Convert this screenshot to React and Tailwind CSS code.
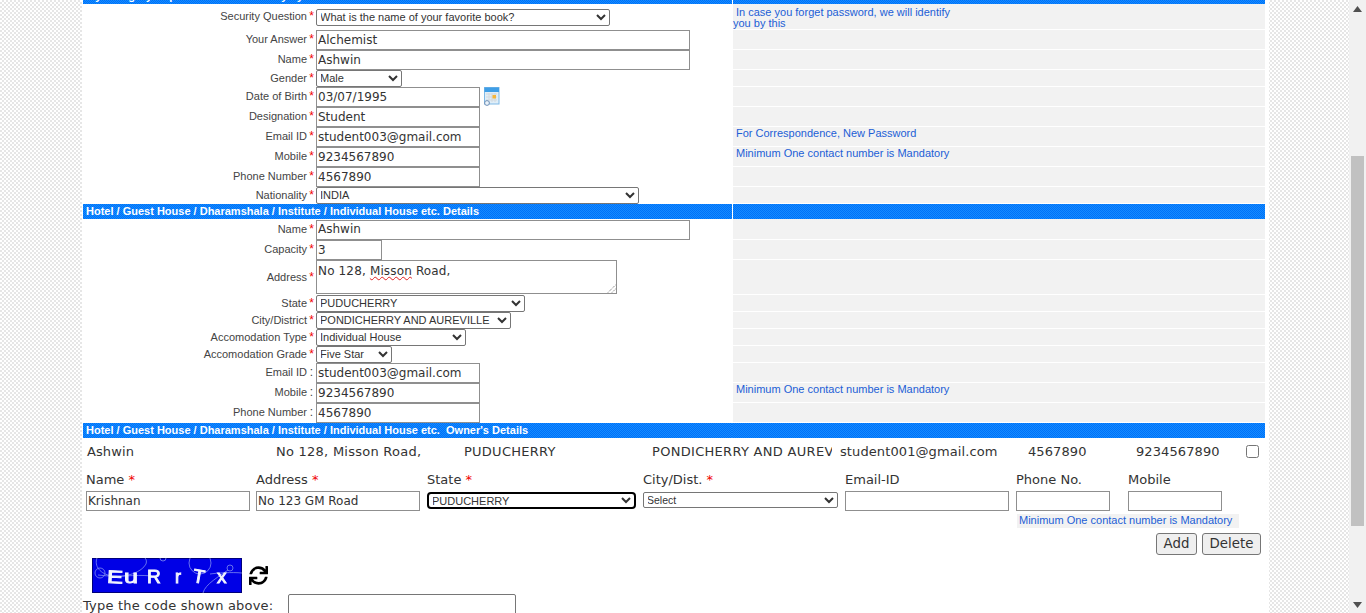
import React from "react";
import { FaSync } from "react-icons/fa";

const sans = "font-['Liberation_Sans',Arial,sans-serif]";
const dv = "font-['DejaVu_Sans',Verdana,sans-serif]";

function Band({ children, split = true, h = "h-[15px]" }) {
  return (
    <div className={`${h} flex items-end overflow-hidden`}>
      <div className={`${h} w-[649px] shrink-0 flex items-end overflow-hidden pl-[3px] bg-[image:repeating-conic-gradient(#0070f8_0_25%,#148cff_0_50%)] bg-[length:2px_2px] text-white font-bold text-[11px] leading-[15px] whitespace-pre ${sans}`}>
        {children}
      </div>
      <div className={`${h} flex-1 bg-[image:repeating-conic-gradient(#0070f8_0_25%,#148cff_0_50%)] bg-[length:2px_2px] ${split ? "ml-px" : ""}`} />
    </div>
  );
}

function Row({ h, label, star = true, hint, children }) {
  return (
    <div className="flex" style={{ height: h }}>
      <div className="w-[650px] shrink-0 flex items-center">
        <div className={`w-[224px] shrink-0 text-right text-[11px] leading-[14px] -translate-y-px text-[#444] ${sans}`}>{label}</div>
        <div className={`w-[9px] shrink-0 text-center text-[12px] leading-[14px] -translate-y-px ${star ? "text-[#f00000]" : "text-[#444]"} ${sans}`}>{star ? "*" : ":"}</div>
        <div className="flex items-center gap-[4px]">{children}</div>
      </div>
      <div className={`flex-1 mb-px bg-[#f2f2f2] text-[11px] leading-[11px] text-[#1c5ed6] ${sans}`}>{hint}</div>
    </div>
  );
}

function Field({ w, value = "", h = "h-[20px]", text = "text-[12px]" }) {
  return (
    <input
      readOnly
      value={value}
      className={`${w} ${h} ${text} ${dv} block border border-[#8f8f8f] bg-white px-px pb-px text-[#333] outline-none`}
    />
  );
}

function Sel({ w, value, h = "h-[17px]", text = "text-[11px]", extra = "border-[#767676]" }) {
  return (
    <select
      defaultValue={value}
      className={`${w} ${h} ${text} ${sans} block border ${extra} rounded-[2px] bg-white pl-0 pb-px text-[#333] outline-none appearance-auto [text-indent:-1px]`}
    >
      <option>{value}</option>
    </select>
  );
}

function Hint({ children }) {
  return <div className="pl-[3px] pt-px">{children}</div>;
}

function CalendarIcon() {
  return (
    <svg width="16" height="19" viewBox="0 0 16 19" className="self-start">
      <rect x="0.5" y="0.5" width="14.5" height="16.5" fill="#dfeef8" stroke="#7fb9e6" />
      <rect x="0.5" y="0.5" width="14.5" height="4.5" fill="#3f9ee6" />
      <path d="M2 7h11M2 10h11M2 13h11M5 6v9M8 6v9M11 6v9" stroke="#d4d9de" strokeWidth="1" />
      <rect x="8.5" y="8" width="3.5" height="3.5" fill="#f5b63c" />
      <circle cx="3" cy="16" r="2.4" fill="#eaf3fa" stroke="#6f8fb5" />
    </svg>
  );
}

function Captcha() {
  return (
    <svg width="150" height="35" viewBox="0 0 150 35" className="block">
      <defs>
        <filter id="soft" x="-5%" y="-5%" width="110%" height="110%">
          <feGaussianBlur stdDeviation="0.4" />
        </filter>
      </defs>
      <rect width="150" height="35" fill="#0000e6" />
      <rect x="0.5" y="0.5" width="149" height="34" fill="none" stroke="#00007a" />
      <g filter="url(#soft)">
        <g fill="none" stroke="#7f8cf0" strokeWidth="0.8">
          <path d="M5 0 C 2 8, 8 16, 20 18 C 34 20, 50 14, 54 6 C 55 3, 54 1, 53 0" />
          <circle cx="108" cy="5" r="11" />
          <circle cx="71" cy="0" r="3" />
          <circle cx="138" cy="10" r="3" />
          <circle cx="8" cy="15" r="5" />
          <path d="M6 17 C 30 20, 40 16, 60 18 M118 16 C 125 15, 140 14, 150 15 M111 35 C 113 26, 128 18, 136 12" />
        </g>
        <g fill="#f2f4ff" stroke="#f2f4ff" strokeWidth="0.9" fontFamily="'Liberation Sans', Arial, sans-serif">
          <text x="15" y="25" fontSize="18" textLength="16" lengthAdjust="spacingAndGlyphs" transform="rotate(3 22 20)">E</text>
          <text x="32" y="25" fontSize="18" textLength="14" lengthAdjust="spacingAndGlyphs">u</text>
          <text x="55" y="25" fontSize="19">R</text>
          <text x="83" y="25" fontSize="18">r</text>
          <text x="101" y="25" fontSize="19" transform="rotate(10 108 18)">T</text>
          <text x="125" y="25" fontSize="19">x</text>
        </g>
      </g>
    </svg>
  );
}

export default function App() {
  return (
    <div className={`h-[613px] w-[1366px] overflow-hidden flex bg-[image:repeating-conic-gradient(#e6e6e6_0_25%,#ffffff_0_50%)] bg-[length:4px_4px] ${sans}`}>
      <main className="ml-[82px] w-[1187px] h-full overflow-hidden bg-white pl-px pr-[4px]">
        <Band h="h-[4px]">My Category Superintendent Authority by</Band>

        <Row h={26} label="Security Question" hint={
          <div className="pt-[3px]"><div className="pl-[3px]">In case you forget password, we will identify</div><div>you by this</div></div>
        }>
          <Sel w="w-[294px]" value="What is the name of your favorite book?" />
        </Row>
        <Row h={20} label="Your Answer"><Field w="w-[374px]" value="Alchemist" /></Row>
        <Row h={20} label="Name"><Field w="w-[374px]" value="Ashwin" /></Row>
        <Row h={17} label="Gender"><Sel w="w-[86px]" value="Male" /></Row>
        <Row h={20} label="Date of Birth"><Field w="w-[164px]" value="03/07/1995" /><CalendarIcon /></Row>
        <Row h={20} label="Designation"><Field w="w-[164px]" value="Student" /></Row>
        <Row h={20} label="Email ID" hint={<Hint>For Correspondence, New Password</Hint>}><Field w="w-[164px]" value="student003@gmail.com" /></Row>
        <Row h={20} label="Mobile" hint={<Hint>Minimum One contact number is Mandatory</Hint>}><Field w="w-[164px]" value="9234567890" /></Row>
        <Row h={20} label="Phone Number"><Field w="w-[164px]" value="4567890" /></Row>
        <Row h={17} label="Nationality"><Sel w="w-[323px]" value="INDIA" /></Row>

        <Band>Hotel / Guest House / Dharamshala / Institute / Individual House etc. Details</Band>

        <Row h={21} label="Name"><Field w="w-[374px]" value="Ashwin" /></Row>
        <Row h={20} label="Capacity"><Field w="w-[66px]" value="3" /></Row>
        <Row h={35} label="Address">
          <div className={`relative w-[301px] h-[34px] -mt-px border border-[#8f8f8f] bg-white px-px pt-[2px] text-[12px] tracking-[0.15px] leading-[16px] text-[#333] ${dv}`}>
            No 128, <span className="underline decoration-wavy decoration-[#e02020] decoration-1 underline-offset-1">Misson</span> Road,
            <svg width="10" height="10" viewBox="0 0 10 10" className="absolute right-0 bottom-0">
              <path d="M2 9.5 9.5 2M6 9.5 9.5 6" stroke="#666" strokeWidth="1" strokeDasharray="1 1" />
            </svg>
          </div>
        </Row>
        <Row h={17} label="State"><Sel w="w-[209px]" value="PUDUCHERRY" /></Row>
        <Row h={17} label="City/District"><Sel w="w-[195px]" value="PONDICHERRY AND AUREVILLE" /></Row>
        <Row h={17} label="Accomodation Type"><Sel w="w-[150px]" value="Individual House" /></Row>
        <Row h={17} label="Accomodation Grade"><Sel w="w-[76px]" value="Five Star" /></Row>
        <Row h={20} label="Email ID" star={false}><Field w="w-[164px]" value="student003@gmail.com" /></Row>
        <Row h={20} label="Mobile" star={false} hint={<Hint>Minimum One contact number is Mandatory</Hint>}><Field w="w-[164px]" value="9234567890" /></Row>
        <Row h={20} label="Phone Number" star={false}><Field w="w-[164px]" value="4567890" /></Row>

        <Band split={false}>Hotel / Guest House / Dharamshala / Institute / Individual House etc.  Owner's Details</Band>

        <div className={`h-[27px] flex items-center pl-[4px] text-[13px] tracking-[0.1px] text-[#333] whitespace-nowrap ${dv}`}>
          <div className="w-[189px] shrink-0">Ashwin</div>
          <div className="w-[188px] shrink-0 tracking-[0.25px]">No 128, Misson Road,</div>
          <div className="w-[188px] shrink-0 tracking-[0.25px]">PUDUCHERRY</div>
          <div className="w-[180px] mr-[8px] shrink-0 overflow-hidden tracking-[0.3px]">PONDICHERRY AND AUREVILLE</div>
          <div className="w-[188px] shrink-0">student001@gmail.com</div>
          <div className="w-[108px] shrink-0">4567890</div>
          <div className="w-[110px] shrink-0">9234567890</div>
          <input type="checkbox" readOnly className="w-[13px] h-[13px] m-0 appearance-auto" />
        </div>

        <div className={`pl-[3px] grid grid-cols-[170px_171px_216px_202px_171px_112px_1fr] text-[13px] text-[#333] ${dv}`}>
          {[["Name", true], ["Address", true], ["State", true], ["City/Dist.", true], ["Email-ID", false], ["Phone No.", false], ["Mobile", false]].map(([t, s]) => (
            <div key={t} className="h-[26px] leading-[16px] pt-[7px]">{t}{s && <span className="text-[#f00000]"> *</span>}</div>
          ))}
          <Field w="w-[164px]" value="Krishnan" />
          <Field w="w-[164px]" value="No 123 GM Road" />
          <div className="h-[20px] pt-px"><Sel w="w-[209px]" value="PUDUCHERRY" extra="border-2 border-black rounded-[4px]" /></div>
          <div className="h-[20px] pt-px"><Sel w="w-[195px]" h="h-[16px]" value="Select" text="text-[10.5px]" /></div>
          <Field w="w-[164px]" />
          <Field w="w-[94px]" />
          <Field w="w-[94px]" />
        </div>

        <div className="flex pl-[934px] pt-[3px]">
          <div className="w-[222px] h-[14px] bg-[#f2f2f2] pl-[2px] text-[11px] leading-[13px] text-[#1c5ed6]">Minimum One contact number is Mandatory</div>
        </div>

        <div className={`flex justify-end gap-[5px] pr-[4px] pt-[5px] text-[13.33px] text-[#333] ${dv}`}>
          <button className="w-[41px] h-[22px] border border-[#767676] rounded-[3px] bg-[#efefef] leading-[20px]">Add</button>
          <button className="w-[59px] h-[22px] border border-[#767676] rounded-[3px] bg-[#efefef] leading-[20px]">Delete</button>
        </div>

        <div className="flex items-center pl-[9px] pt-[3px]">
          <Captcha />
          <FaSync className="ml-[7px] w-[19px] h-[21px] text-black" />
        </div>

        <div className={`flex pt-px text-[13px] text-[#333] ${dv}`}>
          <div className="w-[205px] pt-[4px] tracking-[0.2px] leading-[16px] whitespace-nowrap">Type the code shown above:</div>
          <input readOnly className="w-[228px] h-[30px] border border-[#767676] rounded-[2px] bg-white" />
        </div>
      </main>

      <aside className="ml-auto w-[17px] h-full bg-[#f1f1f1] flex flex-col items-center">
        <div className="h-[17px] flex items-center justify-center">
          <svg width="9" height="6" viewBox="0 0 9 6"><path d="M4.5 0 9 6H0Z" fill="#505050" /></svg>
        </div>
        <div className="mt-[139px] w-[13px] h-[370px] bg-[#c1c1c1]" />
        <div className="mt-auto h-[17px] flex items-center justify-center">
          <svg width="9" height="6" viewBox="0 0 9 6"><path d="M0 0H9L4.5 6Z" fill="#505050" /></svg>
        </div>
      </aside>
    </div>
  );
}
